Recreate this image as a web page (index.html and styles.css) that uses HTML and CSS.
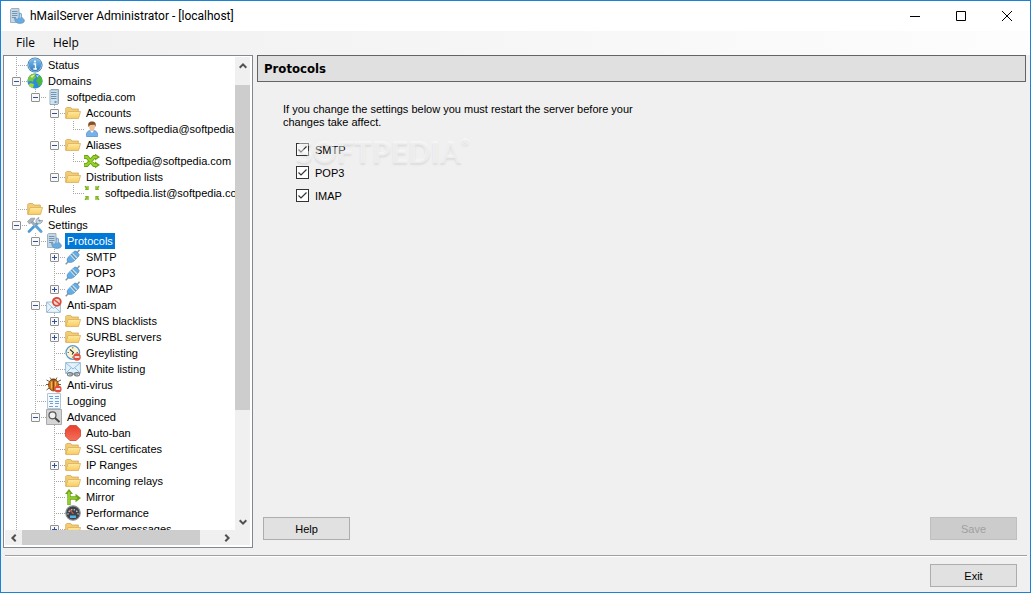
FILE: index.html
```
<!DOCTYPE html>
<html lang="en">
<head>
  <meta charset="UTF-8">
  <title>hMailServer Administrator</title>
  <link rel="stylesheet" href="styles.css">
</head>
<body>

  <!-- Icon set -->
  <svg class="icon-set" aria-hidden="true">
    <defs>
      <linearGradient id="g-folder" x1="0" y1="0" x2="0" y2="1">
        <stop offset="0" stop-color="#fde9a4"/><stop offset="1" stop-color="#f7cb5c"/>
      </linearGradient>
      <linearGradient id="g-blue" x1="0" y1="0" x2="0" y2="1">
        <stop offset="0" stop-color="#7dbbe9"/><stop offset="1" stop-color="#2f7fc4"/>
      </linearGradient>
      <linearGradient id="g-red" x1="0" y1="0" x2="0" y2="1">
        <stop offset="0" stop-color="#e8412c"/><stop offset="1" stop-color="#f4705a"/>
      </linearGradient>
    </defs>
    <symbol id="server" viewBox="0 0 16 16">
      <path d="M4 1.500 5 .5h7.500v14l-1 1H4z" fill="#b4cde0" stroke="#8299ab" stroke-width=".8"/>
      <path d="M4.500 2h6.500v13H4.500z" fill="#cfe1ee"/>
      <path d="M5 3.500h5.500M5 5.500h5.500M5 7.500h5.500M5 9.500h5.500" stroke="#6f93ae"/>
      <path d="M8.500 13h2" stroke="#4b83ac" stroke-width="1.500"/>
    </symbol>
    <symbol id="server-wrench" viewBox="0 0 16 16">
      <path d="M1.500 1.500 2.500.5H10v14H1.500z" fill="#c3d7e6" stroke="#8fa3b3" stroke-width=".8"/>
      <path d="M3 3.500h5.500M3 5.500h5.500M3 7.500h5.500M3 9.500h4" stroke="#7796ad"/>
      <path d="m10.500 4.800 2 1v3l2.700 3c.8 1.500-.7 3.700-2.700 3.400-2.500.8-5.500 0-6.500-2.500L5.500 10l2.500 1.200 2-1.200.5-2.500z" fill="#68abdf" stroke="#5d8fb8" stroke-width=".6"/>
      <path d="m11 5.500 1 .8v3l-1.500 1z" fill="#b8d8f0"/>
    </symbol>
    <symbol id="info" viewBox="0 0 16 16">
      <circle cx="8" cy="8" r="7.600" fill="#3d77ab"/>
      <circle cx="8" cy="8" r="6.800" fill="#b5d3ea"/>
      <circle cx="8" cy="8" r="6.200" fill="url(#g-blue)"/>
      <circle cx="8" cy="4.500" r="1.100" fill="#fff"/>
      <path d="M6.500 7H8.500v4.500M6.300 12h3.600" stroke="#fff" stroke-width="1.300" fill="none"/>
    </symbol>
    <symbol id="globe" viewBox="0 0 16 16">
      <circle cx="8" cy="8" r="7.600" fill="#2d8ddb"/>
      <path d="M2 3.500C4 1 7 .3 9 .7L8 3l1 1.500-2.500 2-.5 2.500L4 8 .7 8.500C.5 7 1 5 2 3.500z" fill="#7cc63f"/>
      <path d="m11.500 3 2.500.5c1.500 2 1.800 5 .8 7.500L12 13.500l-1.500-3.500L9 8z" fill="#4db83c"/>
      <path d="m3.500 10 3.500 1-1 4c-2-.4-3.500-1.500-4.500-3z" fill="#a5d638"/>
      <path d="M3.500 3.500C5 2 7 1.500 8 1.800L5 5z" fill="#d9f0a8"/>
      <path d="M9 2.500 12 2l-1.500 2.500z" fill="#a9dcf8"/>
    </symbol>
    <symbol id="folder" viewBox="0 0 16 16">
      <path d="M.7 13.300V3.500l1-1h4l1.200 1.500h6.400v3" fill="#f3cd74" stroke="#d3a656" stroke-width=".8"/>
      <path d="M3 6.500h12.500l-2 7H.9z" fill="url(#g-folder)" stroke="#dcae58" stroke-width=".8"/>
    </symbol>
    <symbol id="user" viewBox="0 0 16 16">
      <path d="M2.500 15.500c-.5-3.500 1-6 4-6h3c3 0 4.500 2.500 4 6z" fill="#74b2e9" stroke="#4a87c4" stroke-width=".7"/>
      <path d="m6 9.500 2 2.500 2-2.500z" fill="#fff"/>
      <path d="M5 4.500c0 3.500 1 5.500 3 5.500s3-2 3-5.500L8 3z" fill="#f3c094"/>
      <path d="M4.500 6C3.500 2 5 .4 8 .4S12.500 2 11.500 6L10.500 3.700 6 4z" fill="#80502c"/>
    </symbol>
    <symbol id="shuffle" viewBox="0 0 16 16">
      <path d="M0 4h3l7 8h2M0 12h3l7-8h2" fill="none" stroke="#6fa518" stroke-width="3.800"/>
      <path d="M11 .7 16 4l-5 3.600zM11 8.400l5 3.600-5 3.300z" fill="#6fa518"/>
      <path d="M.5 4H3l7 8h3M.5 12H3l7-8h3" fill="none" stroke="#97d12d" stroke-width="2"/>
    </symbol>
    <symbol id="list" viewBox="0 0 16 16">
      <path d="M.5 1.500 1.500.8l1.200.8 2-.5v4L1 5l.7-1.500zM15.500 1.500l-1-.7-1.200.8-2-.5v4l3.700-.1-.7-1.500zM.5 14.500l1 .7 1.200-.8 2 .5v-4L1 11l.7 1.500zM15.500 14.500l-1 .7-1.200-.8-2 .5v-4l3.700.1-.7 1.500z" fill="#7db61f"/>
      <path d="M2.500 2.500h1.500V4zM13.500 2.500H12V4zM2.500 13.500h1.500V12zM13.500 13.500H12V12z" fill="#a6db45"/>
    </symbol>
    <symbol id="tools" viewBox="0 0 16 16">
      <path d="M2 14.500 12.500 4" stroke="#4799d9" stroke-width="2.600" stroke-linecap="round"/>
      <path d="m5 5 9 9.500" stroke="#9cacb8" stroke-width="3" stroke-linecap="round"/>
      <path d="m9 9 5 5.300" stroke="#55a5df" stroke-width="2.400" stroke-linecap="round"/>
      <path d="M.5 4.500 4 1.200h4L6.500 3.500l-4 3.500z" fill="#aab4bb" stroke="#7f8b94" stroke-width=".6"/>
      <path d="M9 5.500c-.5-2 .5-4.500 3-5l-1 2.300 1.500 1.500 3-1c0 2-2 4-4.500 3.500z" fill="#d1d7db" stroke="#84919a" stroke-width=".7"/>
    </symbol>
    <symbol id="plug" viewBox="0 0 16 16">
      <path d="m.7 15.300 3.500-3.500M11.500 4.500 14.500.8" stroke="#8a9299" stroke-width="1.400"/>
      <path d="M2.500 12.500c-1-2 0-4 2-5.500l4.500-4.500 2-.5 3.200 3.500-.7 2L9 12c-2 1.500-4.500 2-6.500.5z" fill="#62aee5" stroke="#5288b7" stroke-width=".7"/>
      <path d="m5.500 6 4.500 5M7.500 4.500 12 9" stroke="#d4e4ef" stroke-width="1.100"/>
      <path d="m6.500 5 4.500 5" stroke="#68839a" stroke-width=".9"/>
    </symbol>
    <symbol id="spam" viewBox="0 0 16 16">
      <path d="M.6 5h13.800v10.400H.6z" fill="#e9f4fb" stroke="#94b4c8" stroke-width=".9"/>
      <path d="m1 15 5-5M14 15l-5-5M1 5.500l6.500 6 6-6" fill="none" stroke="#8dbbd9" stroke-width=".9"/>
      <circle cx="10.800" cy="4.800" r="4" fill="#f6d3cc" stroke="#d94b39" stroke-width="1.700"/>
      <path d="m8 2.500 5.500 4.500" stroke="#d94b39" stroke-width="1.500"/>
    </symbol>
    <symbol id="clock" viewBox="0 0 16 16">
      <circle cx="7.800" cy="7.500" r="6.800" fill="#fbf5cf" stroke="#5c9ccd" stroke-width="1.300"/>
      <path d="M7.800 2v1.500M2.500 7.500H4M7.800 13v-1.500M13 7.500h-1.500" stroke="#777"/>
      <path d="m5 4.500 3.500 3L7 9.500" fill="none" stroke="#333" stroke-width="1.100"/>
      <circle cx="12" cy="12" r="3.800" fill="#e34f3d"/><path d="M9.700 12h4.600" stroke="#fff" stroke-width="1.600"/>
    </symbol>
    <symbol id="white" viewBox="0 0 16 16">
      <path d="M.6 1.600h14.800v10.800H.6z" fill="#e3f1fa" stroke="#90b5cf" stroke-width=".9"/>
      <path d="m1 12 5-5M15 12l-5-5M1 2l7 6 7-6" fill="none" stroke="#89bce0" stroke-width="1"/>
      <path d="M4 13.200h9" stroke="#888"/>
      <rect x="2.500" y="11.500" width="5" height="3.400" rx="1.700" fill="none" stroke="#777d80" stroke-width="1.200"/>
      <rect x="9.500" y="11.500" width="5" height="3.400" rx="1.700" fill="none" stroke="#777d80" stroke-width="1.200"/>
    </symbol>
    <symbol id="bug" viewBox="0 0 16 16">
      <path d="m.5 3 4 2M15 3l-4 2M0 7.500h15M.5 13l4-3M4 .5 6 3M11 .5 9.500 3" stroke="#6b4a2c" stroke-width=".9"/>
      <ellipse cx="7.500" cy="8" rx="5" ry="6" fill="#c8731d" stroke="#7f4310" stroke-width=".8"/>
      <path d="M4 3.500C5 1 10 1 11 3.500z" fill="#74451d"/>
      <path d="M5.500 4.500v7M9.500 4.500v7" stroke="#f5b456" stroke-width="1.200"/><path d="M7.500 4v9.500" stroke="#743f10" stroke-width=".8"/>
      <circle cx="12" cy="12" r="3.600" fill="#e34f3d"/><path d="M9.800 12h4.400" stroke="#fff" stroke-width="1.600"/>
    </symbol>
    <symbol id="log" viewBox="0 0 16 16">
      <path d="M1.500.5h13v15h-13z" fill="#f5f9fd" stroke="#a9bfd3" stroke-width=".9"/>
      <path d="M3 3.500h4M9 3.500h4M4 5.500h3M9 5.500h4M3 8.500h4M9 8.500h4M4 10.500h3M9 10.500h4M3 13.500h4M9 13.500h3" stroke="#6ba3dc"/>
    </symbol>
    <symbol id="search" viewBox="0 0 16 16">
      <path d="M.5.5h15v15H.5z" fill="#d5d5d5" stroke="#aaa"/>
      <circle cx="6.500" cy="6.300" r="3.500" fill="#f1f1f1" stroke="#555" stroke-width="1.200"/>
      <path d="m9 9 4.500 4" stroke="#444" stroke-width="2"/>
    </symbol>
    <symbol id="stop" viewBox="0 0 16 16">
      <path d="M4.800.5h6.400l4.300 4.300v6.400l-4.300 4.300H4.800L.5 11.200V4.800z" fill="url(#g-red)" stroke="#cf4030" stroke-width=".8"/>
    </symbol>
    <symbol id="mirror" viewBox="0 0 16 16">
      <path d="M4 16V4M4 9h7" stroke="#6fa518" stroke-width="3.400"/>
      <path d="M0 5 4 0l4 5zM10.500 4.800 16 9l-5.500 4.200z" fill="#6fa518"/>
      <path d="M4 15.500V3M4 9h8" stroke="#9bd62f" stroke-width="1.700"/>
    </symbol>
    <symbol id="gauge" viewBox="0 0 16 16">
      <circle cx="8" cy="8" r="7.200" fill="#3d4247" stroke="#8b8f92" stroke-width="1.200"/>
      <path d="M3 9.500a5 5 0 1 1 10 0" fill="none" stroke="#dadada" stroke-width="1.200" stroke-dasharray="1.300 1.500"/>
      <path d="m4.500 4.500 4 4.500" stroke="#ef5b43" stroke-width="1.100"/>
      <path d="M5 10.500h6v2.500H5z" fill="#54b3ee"/>
    </symbol>
  </svg>

  <div class="window">
    <header class="title-bar">
      <svg class="icon"><use href="#server-wrench"/></svg>
      <h1>hMailServer Administrator - [localhost]</h1>
      <div class="window-buttons">
        <button type="button" aria-label="Minimize"><svg viewBox="0 0 10 10"><path d="M0 5.500h10"/></svg></button>
        <button type="button" aria-label="Maximize"><svg viewBox="0 0 10 10"><path d="M.5.5h9v9h-9z"/></svg></button>
        <button type="button" aria-label="Close"><svg viewBox="0 0 10 10"><path d="m0 0 10 10M10 0 0 10"/></svg></button>
      </div>
    </header>

    <nav class="menu-bar">
      <button type="button">File</button>
      <button type="button">Help</button>
    </nav>

    <div class="workspace">
      <!-- Navigation tree -->
      <aside class="sidebar">
        <div class="tree-view">
          <ul class="tree">
            <li><div class="row"><span class="branch"></span><svg class="icon"><use href="#info"/></svg><span class="label">Status</span></div></li>
            <li><div class="row"><span class="branch"><button type="button" class="toggle open" aria-label="Collapse"></button></span><svg class="icon"><use href="#globe"/></svg><span class="label">Domains</span></div>
              <ul>
                <li><div class="row"><span class="branch"><button type="button" class="toggle open" aria-label="Collapse"></button></span><svg class="icon"><use href="#server"/></svg><span class="label">softpedia.com</span></div>
                  <ul>
                    <li><div class="row"><span class="branch"><button type="button" class="toggle open" aria-label="Collapse"></button></span><svg class="icon"><use href="#folder"/></svg><span class="label">Accounts</span></div>
                      <ul>
                        <li><div class="row"><span class="branch"></span><svg class="icon"><use href="#user"/></svg><span class="label">news.softpedia@softpedia.com</span></div></li>
                      </ul>
                    </li>
                    <li><div class="row"><span class="branch"><button type="button" class="toggle open" aria-label="Collapse"></button></span><svg class="icon"><use href="#folder"/></svg><span class="label">Aliases</span></div>
                      <ul>
                        <li><div class="row"><span class="branch"></span><svg class="icon"><use href="#shuffle"/></svg><span class="label">Softpedia@softpedia.com</span></div></li>
                      </ul>
                    </li>
                    <li><div class="row"><span class="branch"><button type="button" class="toggle open" aria-label="Collapse"></button></span><svg class="icon"><use href="#folder"/></svg><span class="label">Distribution lists</span></div>
                      <ul>
                        <li><div class="row"><span class="branch"></span><svg class="icon"><use href="#list"/></svg><span class="label">softpedia.list@softpedia.com</span></div></li>
                      </ul>
                    </li>
                  </ul>
                </li>
              </ul>
            </li>
            <li><div class="row"><span class="branch"></span><svg class="icon"><use href="#folder"/></svg><span class="label">Rules</span></div></li>
            <li><div class="row"><span class="branch"><button type="button" class="toggle open" aria-label="Collapse"></button></span><svg class="icon"><use href="#tools"/></svg><span class="label">Settings</span></div>
              <ul>
                <li><div class="row"><span class="branch"><button type="button" class="toggle open" aria-label="Collapse"></button></span><svg class="icon"><use href="#server-wrench"/></svg><span class="label selected">Protocols</span></div>
                  <ul>
                    <li><div class="row"><span class="branch"><button type="button" class="toggle" aria-label="Expand"></button></span><svg class="icon"><use href="#plug"/></svg><span class="label">SMTP</span></div></li>
                    <li><div class="row"><span class="branch"></span><svg class="icon"><use href="#plug"/></svg><span class="label">POP3</span></div></li>
                    <li><div class="row"><span class="branch"><button type="button" class="toggle" aria-label="Expand"></button></span><svg class="icon"><use href="#plug"/></svg><span class="label">IMAP</span></div></li>
                  </ul>
                </li>
                <li><div class="row"><span class="branch"><button type="button" class="toggle open" aria-label="Collapse"></button></span><svg class="icon"><use href="#spam"/></svg><span class="label">Anti-spam</span></div>
                  <ul>
                    <li><div class="row"><span class="branch"><button type="button" class="toggle" aria-label="Expand"></button></span><svg class="icon"><use href="#folder"/></svg><span class="label">DNS blacklists</span></div></li>
                    <li><div class="row"><span class="branch"><button type="button" class="toggle" aria-label="Expand"></button></span><svg class="icon"><use href="#folder"/></svg><span class="label">SURBL servers</span></div></li>
                    <li><div class="row"><span class="branch"></span><svg class="icon"><use href="#clock"/></svg><span class="label">Greylisting</span></div></li>
                    <li><div class="row"><span class="branch"></span><svg class="icon"><use href="#white"/></svg><span class="label">White listing</span></div></li>
                  </ul>
                </li>
                <li><div class="row"><span class="branch"></span><svg class="icon"><use href="#bug"/></svg><span class="label">Anti-virus</span></div></li>
                <li><div class="row"><span class="branch"></span><svg class="icon"><use href="#log"/></svg><span class="label">Logging</span></div></li>
                <li><div class="row"><span class="branch"><button type="button" class="toggle open" aria-label="Collapse"></button></span><svg class="icon"><use href="#search"/></svg><span class="label">Advanced</span></div>
                  <ul>
                    <li><div class="row"><span class="branch"></span><svg class="icon"><use href="#stop"/></svg><span class="label">Auto-ban</span></div></li>
                    <li><div class="row"><span class="branch"></span><svg class="icon"><use href="#folder"/></svg><span class="label">SSL certificates</span></div></li>
                    <li><div class="row"><span class="branch"><button type="button" class="toggle" aria-label="Expand"></button></span><svg class="icon"><use href="#folder"/></svg><span class="label">IP Ranges</span></div></li>
                    <li><div class="row"><span class="branch"></span><svg class="icon"><use href="#folder"/></svg><span class="label">Incoming relays</span></div></li>
                    <li><div class="row"><span class="branch"></span><svg class="icon"><use href="#mirror"/></svg><span class="label">Mirror</span></div></li>
                    <li><div class="row"><span class="branch"></span><svg class="icon"><use href="#gauge"/></svg><span class="label">Performance</span></div></li>
                    <li><div class="row"><span class="branch"><button type="button" class="toggle" aria-label="Expand"></button></span><svg class="icon"><use href="#folder"/></svg><span class="label">Server messages</span></div></li>
                  </ul>
                </li>
              </ul>
            </li>
          </ul>
        </div>
        <div class="scroll vertical">
          <button type="button" aria-label="Scroll up"><svg viewBox="0 0 8 8"><path d="m.7 5.700 3.300-3.300 3.300 3.300"/></svg></button>
          <div class="track"><div class="thumb"></div></div>
          <button type="button" aria-label="Scroll down"><svg viewBox="0 0 8 8"><path d="m.7 2.300 3.300 3.300 3.300-3.300"/></svg></button>
        </div>
        <div class="scroll horizontal">
          <button type="button" aria-label="Scroll left"><svg viewBox="0 0 8 8"><path d="M5.700.7 2.400 4l3.300 3.300"/></svg></button>
          <div class="track"><div class="thumb"></div></div>
          <button type="button" aria-label="Scroll right"><svg viewBox="0 0 8 8"><path d="M2.300.7 5.600 4 2.300 7.300"/></svg></button>
        </div>
        <div class="scroll-corner"></div>
      </aside>

      <!-- Settings page -->
      <main class="panel">
        <h2>Protocols</h2>
        <div class="settings">
          <p>If you change the settings below you must restart the server before your changes take affect.</p>
          <div class="options">
            <label><input type="checkbox" checked> SMTP</label>
            <label><input type="checkbox" checked> POP3</label>
            <label><input type="checkbox" checked> IMAP</label>
            <div class="watermark">SOFTPEDIA<sup>®</sup></div>
          </div>
        </div>
        <div class="actions">
          <button type="button" class="btn">Help</button>
          <button type="button" class="btn" disabled>Save</button>
        </div>
      </main>
    </div>

    <footer class="bottom-bar">
      <button type="button" class="btn">Exit</button>
    </footer>
  </div>

</body>
</html>
```

FILE: styles.css
```
* {
  box-sizing: border-box;
}

body {
  margin: 0;
  font-family: "Liberation Sans", Arial, sans-serif;
  font-size: 11px;
  color: #000;
}

button {
  font: inherit;
  color: inherit;
  margin: 0;
  padding: 0;
  border: none;
  background: none;
}

ul {
  list-style: none;
  margin: 0;
  padding: 0;
}

.icon-set {
  position: absolute;
  width: 0;
  height: 0;
}

.icon {
  width: 16px;
  height: 16px;
  flex: none;
}

.window {
  display: flex;
  flex-direction: column;
  height: 100vh;
  border: 1px solid #1883d7;
  background: #f0f0f0;
}

/* Title bar and menu */
.title-bar {
  display: flex;
  align-items: center;
  gap: 5px;
  height: 30px;
  padding-left: 8px;
  background: #fff;
}

.title-bar h1 {
  margin: 0;
  font-family: Roboto, "Noto Sans", sans-serif;
  font-size: 12px;
  font-weight: normal;
}

.window-buttons {
  display: flex;
  margin-left: auto;
}

.window-buttons button {
  width: 46px;
  height: 30px;
}

.window-buttons svg {
  display: block;
  width: 10px;
  height: 10px;
  margin: auto;
  fill: none;
  stroke: #000;
  overflow: visible;
}

.menu-bar {
  display: flex;
  height: 24px;
  padding: 0 0 1px 6px;
  background: linear-gradient(to right, #f0f0f0, #fdfdfd);
  font-family: "Open Sans", "Noto Sans", sans-serif;
  font-size: 12px;
}

.menu-bar button {
  padding: 0 9px;
}

/* Main area */
.workspace {
  display: flex;
  flex: 1;
  gap: 4px;
  min-height: 0;
  padding: 0 4px 7px 2px;
}

.sidebar {
  display: grid;
  grid-template-columns: 1fr 15px;
  grid-template-rows: 1fr 15px;
  flex: none;
  width: 250px;
  padding: 1px 2px 2px 1px;
  border: 1px solid #828790;
  background: #fff;
}

.tree-view {
  min-width: 0;
  min-height: 0;
  overflow: hidden;
}

.tree li {
  background: repeating-linear-gradient(to bottom, #a8a8a8 0 1px, transparent 1px 2px) 11px 0 / 1px 100% no-repeat;
}

.tree ul {
  margin-left: 19px;
}

.tree ul > li:last-child {
  background-size: 1px 8px;
}

.row {
  display: flex;
  height: 16px;
  line-height: 16px;
  white-space: nowrap;
}

.branch {
  display: flex;
  align-items: center;
  flex: none;
  width: 22px;
  padding-left: 7px;
  background: repeating-linear-gradient(to right, #a8a8a8 0 1px, transparent 1px 2px) 11px 8px / 11px 1px no-repeat;
}

.toggle {
  width: 9px;
  height: 9px;
  border: 1px solid #919191;
  border-radius: 1px;
  background:
    linear-gradient(#33509c, #33509c) center / 5px 1px no-repeat,
    linear-gradient(#33509c, #33509c) center / 1px 5px no-repeat,
    #f8f8f8;
}

.toggle.open {
  background:
    linear-gradient(#33509c, #33509c) center / 5px 1px no-repeat,
    #f8f8f8;
}

.label {
  margin-left: 3px;
  padding: 0 2px;
}

.label.selected {
  background: #0078d7;
  color: #fff;
}

/* Scroll bars */
.scroll {
  display: flex;
  background: #f0f0f0;
}

.scroll button {
  flex: none;
  width: 17px;
  height: 17px;
}

.scroll svg {
  display: block;
  width: 8px;
  height: 8px;
  margin: auto;
  fill: none;
  stroke: #505050;
  stroke-width: 2;
}

.scroll.vertical {
  flex-direction: column;
}

.scroll.vertical button {
  width: 15px;
}

.scroll.horizontal button {
  height: 15px;
}

.track {
  flex: 1;
  display: flex;
}

.thumb {
  background: #cdcdcd;
}

.vertical .thumb {
  width: 100%;
  height: 74%;
  margin-top: 11px;
}

.horizontal .thumb {
  width: 91%;
}

.scroll-corner {
  background: #f0f0f0;
}

/* Settings page */
.panel {
  display: flex;
  flex-direction: column;
  flex: 1;
  min-width: 0;
}

.panel h2 {
  margin: 0;
  padding: 0 6px;
  border: 1px solid #646464;
  background: #e0e0e0;
  font-family: "DejaVu Sans Condensed", "DejaVu Sans", sans-serif;
  font-size: 13px;
  line-height: 25px;
}

.settings {
  flex: 1;
  padding: 21px 26px;
}

.settings p {
  max-width: 350px;
  margin: 0;
  line-height: 13px;
}

.options {
  position: relative;
  display: flex;
  flex-direction: column;
  align-items: flex-start;
  margin: 9px 0 0 13px;
}

.options label {
  display: flex;
  align-items: center;
  gap: 6px;
  height: 23px;
}

.options input {
  appearance: none;
  width: 13px;
  height: 13px;
  margin: 0;
  border: 1px solid #333;
  background: #fff;
}

.options input:checked {
  background: #fff url("data:image/svg+xml,%3Csvg xmlns='http://www.w3.org/2000/svg' viewBox='0 0 11 11'%3E%3Cpath d='M1.500 5.500 4 8l5.500-5.500' fill='none' stroke='%23333' stroke-width='1.200'/%3E%3C/svg%3E");
}

.watermark {
  position: absolute;
  top: -2px;
  left: 0;
  color: rgba(255, 255, 255, 0.45);
  font-family: Lato, sans-serif;
  font-size: 30px;
  font-weight: 900;
  line-height: 30px;
  text-shadow: 0 2px 2px rgba(0, 0, 0, 0.08);
  pointer-events: none;
}

.watermark sup {
  font-size: 10px;
  line-height: 10px;
  vertical-align: top;
}

.actions {
  display: flex;
  justify-content: space-between;
  padding: 0 9px 8px 6px;
}

.btn {
  width: 87px;
  height: 23px;
  border: 1px solid #adadad;
  background: #e1e1e1;
}

.btn:disabled {
  border-color: #bfbfbf;
  background: #ccc;
  color: #a0a0a0;
}

.bottom-bar {
  display: flex;
  justify-content: flex-end;
  margin: 0 3px 0 4px;
  padding: 8px 10px 5px;
  border-top: 1px solid #a0a0a0;
  box-shadow: inset 0 1px #fff;
}
```
